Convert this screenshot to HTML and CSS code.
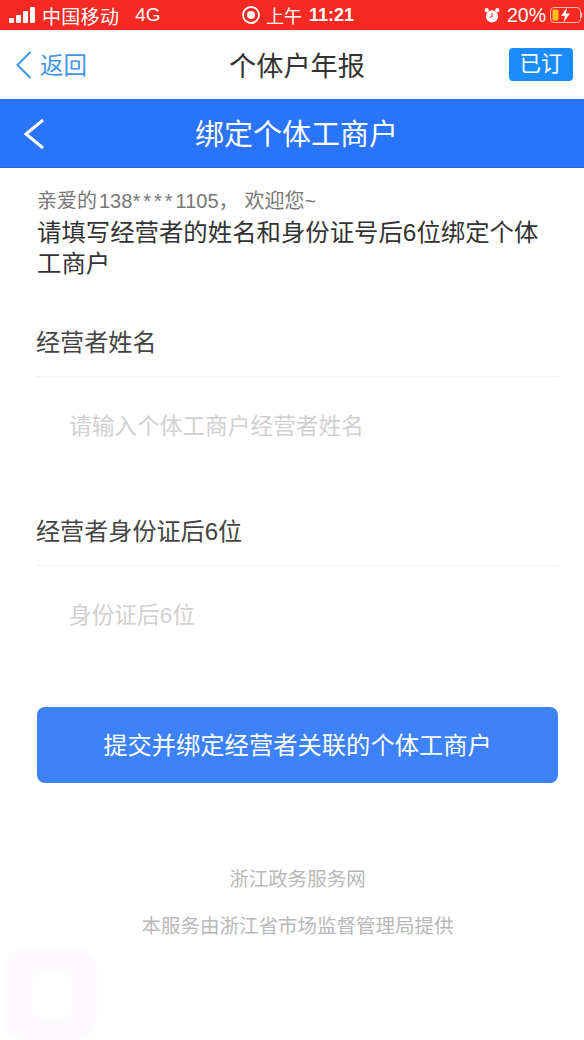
FILE: index.html
```html
<!DOCTYPE html>
<html lang="zh-CN">
<head>
<meta charset="utf-8">
<title>绑定个体工商户</title>
<link rel="stylesheet" href="styles.css">
</head>
<body>
<div class="status">
  <div class="status-side">
    <svg class="signal" width="26" height="16" viewBox="0 0 26 16"><rect x="0" y="11" width="5" height="5" rx="1.200"/><rect x="7" y="8" width="5" height="8" rx="1.200"/><rect x="14" y="4" width="5" height="12" rx="1.200"/><rect x="21" y="0" width="5" height="16" rx="1.200"/></svg>
    <span class="carrier">中国移动</span><span class="net">4G</span>
  </div>
  <div class="status-center">
    <svg width="20" height="20" viewBox="0 0 20 20"><circle cx="10" cy="10" r="8" fill="none" stroke="#fff" stroke-width="1.800"/><circle cx="10" cy="10" r="4" fill="#fff"/></svg>
    <span class="ampm">上午</span><span class="time">11:21</span>
  </div>
  <div class="status-right">
    <svg width="16" height="17" viewBox="0 0 18 18"><circle cx="9" cy="10" r="6.800" fill="#fff"/><path d="M9 6v4.300l-2.500 1" fill="none" stroke="#f5281f" stroke-width="1.200"/><circle cx="3" cy="3" r="2.300" fill="#fff"/><circle cx="15" cy="3" r="2.300" fill="#fff"/></svg>
    <span class="pct">20%</span>
    <svg width="33" height="16" viewBox="0 0 33 16"><rect x="0.500" y="0.500" width="30" height="15" rx="3.500" fill="none" stroke="#ffb3ae"/><rect x="2.500" y="2.500" width="6" height="11" rx="1.500" fill="#fcc419"/><path d="M31.500 5.500v5" stroke="#ffb3ae" stroke-width="1.500"/><path d="M17 0.500L11 9h4l-1.500 6.500L20 6.500h-4z" fill="#fff"/></svg>
  </div>
</div>
<header class="nav">
  <div class="nav-back">
    <svg width="16" height="28" viewBox="0 0 16 28"><path d="M14.500 1L1.500 14l13 13" fill="none" stroke="#3e95e6" stroke-width="2"/></svg>
    <span class="nav-back-text">返回</span>
  </div>
  <div class="nav-title">个体户年报</div>
  <div class="nav-btn">已订</div>
</header>
<div class="bar">
  <svg class="bar-back" width="22" height="32" viewBox="0 0 22 32"><path d="M20 2L3 16l17 14" fill="none" stroke="#fff" stroke-width="3"/></svg>
  <div class="bar-title">绑定个体工商户</div>
</div>
<main class="content">
  <p class="hello">亲爱的<span class="num">138<span class="stars">****</span>1105</span><span class="comma">，</span>欢迎您~</p>
  <p class="lead">请填写经营者的姓名和身份证号后6位绑定个体工商户</p>
  <section class="field first">
    <div class="label">经营者姓名</div>
    <div class="hint">请输入个体工商户经营者姓名</div>
  </section>
  <section class="field second">
    <div class="label">经营者身份证后6位</div>
    <div class="hint">身份证后6位</div>
  </section>
  <button class="submit">提交并绑定经营者关联的个体工商户</button>
  <footer class="foot">
    <div>浙江政务服务网</div>
    <div class="foot-two">本服务由浙江省市场监督管理局提供</div>
  </footer>
</main>
<div class="float"><div class="float-in"></div></div>
</body>
</html>
```

FILE: styles.css
```css
* { box-sizing: border-box; }
html, body { margin: 0; padding: 0; }
body {
  width: 584px;
  height: 1040px;
  position: relative;
  overflow: hidden;
  background: #fff;
  font-family: "Liberation Sans", "Noto Sans CJK SC", sans-serif;
}
p { margin: 0; }
.status {
  height: 30px;
  background: #f62a22;
  color: #fff;
  display: flex;
  align-items: center;
  position: relative;
  font-size: 19px;
  padding: 0 1px 0 9px;
  justify-content: space-between;
}
.status svg { display: block; fill: #fff; }
.status-side { display: flex; align-items: center; }
.carrier { margin-left: 7px; letter-spacing: 0.300px; }
.net { margin-left: 16px; }
.status-center {
  position: absolute;
  left: 241px;
  top: 0;
  height: 30px;
  display: flex;
  align-items: center;
  gap: 5px;
}
.ampm { font-size: 18px; margin-right: 2px; }
.time { font-weight: 700; font-size: 18px; }
.status-right { display: flex; align-items: center; gap: 7px; }
.pct { margin-right: -3px; font-size: 19.500px; }
.nav {
  height: 69px;
  display: flex;
  align-items: center;
  justify-content: space-between;
  position: relative;
  padding: 0 11px 0 16px;
}
.nav-back { display: flex; align-items: center; gap: 8px; color: #3e95e6; font-size: 23.500px; }
.nav-back svg { display: block; }
.nav-back-text { padding-bottom: 2px; }
.nav-title {
  position: absolute;
  left: 10px;
  right: 0;
  text-align: center;
  font-size: 27.200px;
  color: #333;
  padding-bottom: 2px;
  pointer-events: none;
}
.nav-btn {
  width: 64px;
  height: 33px;
  background: #1a8cfb;
  color: #fff;
  border-radius: 4px;
  font-size: 21.500px;
  line-height: 33px;
  text-align: center;
}
.bar {
  height: 69px;
  background: #2a74fb;
  border-bottom: 1px solid #2a68d8;
  display: flex;
  align-items: center;
  justify-content: center;
  position: relative;
  padding-left: 9px;
}
.bar-back { position: absolute; left: 23px; top: 19px; }
.bar-title { color: #fff; font-size: 29px; padding-bottom: 2px; }
.content { padding: 20px 26px 0 37px; }
.hello { font-size: 20px; line-height: 24px; color: #777; margin-top: 1px; }
.num { margin-left: 2px; }
.stars { letter-spacing: 3px; }
.comma { margin-right: 6px; }
.lead { font-size: 24.400px; line-height: 31px; color: #333; margin: 4px 0 0 0; }
.field.first { margin-top: 46px; }
.field.second { margin-top: 72px; }
.label {
  font-size: 24.100px;
  line-height: 35px;
  color: #444;
  padding-bottom: 16px;
  border-bottom: 1px solid #f3f3f3;
  margin-left: -1px;
}
.hint { margin: 33px 0 0 32px; font-size: 22.700px; line-height: 32px; color: #d0d0d0; height: 32px; }
.submit {
  display: block;
  width: 521px;
  height: 76px;
  margin: 76px 0 0 0;
  border: 0;
  border-radius: 8px;
  background: #3d82fb;
  color: #fff;
  font-size: 24.300px;
  font-family: inherit;
  text-align: center;
  padding: 0 0 4px;
}
.foot { text-align: center; color: #b8b8b8; font-size: 19.500px; margin: 83px 0 0 0; line-height: 26px; width: 521px; }
.foot-two { margin-top: 21px; }
.float {
  position: absolute;
  left: 3px;
  top: 948px;
  width: 94px;
  height: 92px;
  background: #fdfbfe;
  border-radius: 22px;
}
.float-in {
  position: absolute;
  left: 29px;
  top: 25px;
  width: 40px;
  height: 45px;
  background: #fff;
  border-radius: 10px;
}
```
